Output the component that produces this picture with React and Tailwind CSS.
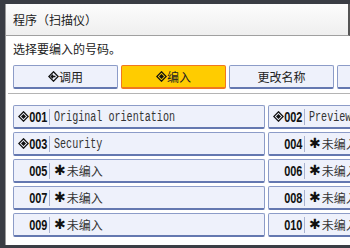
const cjk = { fontFamily: '"Noto Sans CJK SC", "Noto Sans", sans-serif' };

function Diamond({ variant = "fill" }) {
  return (
    <svg width="11" height="11" viewBox="0 0 11 11" className="shrink-0">
      <path d="M5.5 0.8 L10.2 5.5 L5.5 10.2 L0.8 5.5 Z" fill="none" stroke="#111" strokeWidth="1.3" />
      {variant === "fill" ? (
        <path d="M5.5 3 L8 5.5 L5.5 8 L3 5.5 Z" fill="#111" />
      ) : (
        <path d="M7.5 5.5 L3.2 5.5 M5 3.7 L3.2 5.5 L5 7.3" fill="none" stroke="#111" strokeWidth="1.3" />
      )}
    </svg>
  );
}

function TopButton({ children, active }) {
  return (
    <div
      className={
        "w-[105px] shrink-0 h-[24px] flex items-center justify-center rounded-[2px] border text-[12px] text-[#222] " +
        (active
          ? "bg-[#ffcc00] border-[#f07820] border-b-2"
          : "bg-[#eef1fb] border-[#8c9cc8] border-b-2 border-b-[#6478b0]")
      }
      style={cjk}
    >
      {children}
    </div>
  );
}

function Row({ num, text, icon }) {
  return (
    <div className="h-[24px] flex items-center rounded-[2px] border border-[#8c9cc8] border-b-2 border-b-[#6478b0] bg-[#eef1fb] overflow-hidden">
      <div className="w-[35px] shrink-0 flex items-center justify-end pr-[2px]">
        {icon && <Diamond />}
        <div className="w-[18px] flex justify-end">
          <span
            className="shrink-0 inline-block text-[14px] font-bold leading-none scale-x-[0.78] origin-right text-[#111]"
            style={{ fontFamily: '"Liberation Sans", sans-serif' }}
          >
            {num}
          </span>
        </div>
      </div>
      <div className="w-px h-[16px] bg-[#a8b2d0] shrink-0" />
      <div className="pl-[4px] whitespace-nowrap flex items-center">
        {text ? (
          <span
            className="inline-block text-[14px] leading-none scale-x-[0.72] origin-left text-[#333]"
            style={{ fontFamily: '"Liberation Mono", monospace' }}
          >
            {text}
          </span>
        ) : (
          <span className="text-[12px] text-[#333] flex items-center" style={cjk}>
            <span className="font-bold text-[14px] text-[#111] mr-[1px]" style={{ fontFamily: '"DejaVu Sans", sans-serif' }}>✱</span>
            未编入
          </span>
        )}
      </div>
    </div>
  );
}

export default function App() {
  const rows = [
    ["001", "Original orientation", true],
    ["002", "Preview", true],
    ["003", "Security", true],
    ["004", null, false],
    ["005", null, false],
    ["006", null, false],
    ["007", null, false],
    ["008", null, false],
    ["009", null, false],
    ["010", null, false],
  ];

  return (
    <div className="w-[350px] h-[248px] bg-[#3a3d44] pt-[4px] pl-[5px] pb-[3px] flex overflow-hidden">
      <div className="flex-1 bg-white flex flex-col border-l border-[#9a9a9a] min-w-0">
        <div
          className="h-[32px] shrink-0 flex items-center pl-[7px] text-[12px] text-[#222] bg-gradient-to-b from-[#fcfcfc] to-[#efefef] border-b border-[#a0a0a0] border-r-2 border-r-[#555]"
          style={cjk}
        >
          程序（扫描仪）
        </div>
        <div className="h-[25px] shrink-0 flex items-center pl-[7px] text-[12px] text-[#222]" style={cjk}>
          选择要编入的号码。
        </div>
        <div className="flex gap-[3px] pl-[7px] pt-[4px] whitespace-nowrap overflow-hidden">
          <TopButton>
            <Diamond variant="arrow" />
            <span>调用</span>
          </TopButton>
          <TopButton active>
            <Diamond />
            <span>编入</span>
          </TopButton>
          <TopButton>更改名称</TopButton>
          <TopButton />
        </div>
        <div className="h-px bg-[#b4b4b4] ml-[2px] mt-[4px] shrink-0" />
        <div className="grid grid-cols-[252px_120px] gap-x-[3px] gap-y-[3px] pl-[7px] pt-[11px]">
          {rows.map(([n, t, i]) => (
            <Row key={n} num={n} text={t} icon={i} />
          ))}
        </div>
      </div>
    </div>
  );
}
